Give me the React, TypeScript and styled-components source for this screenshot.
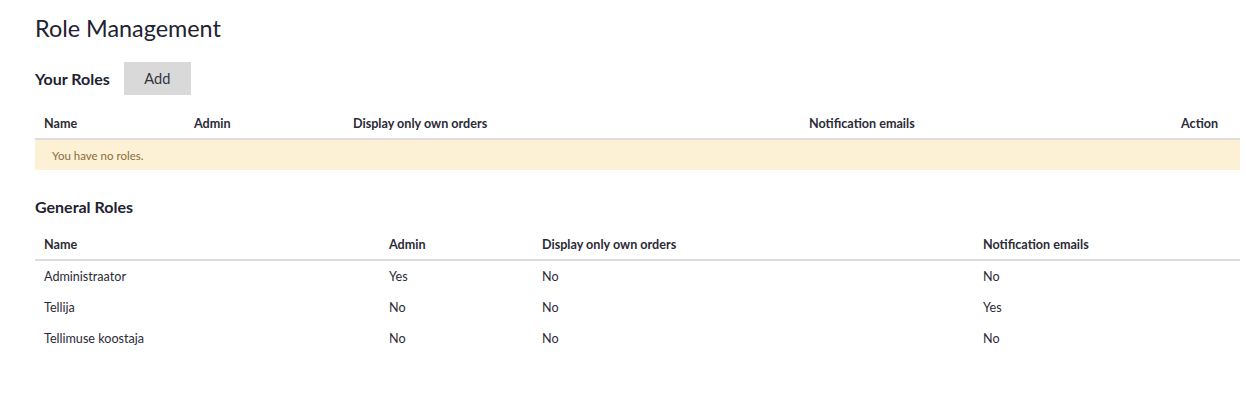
import styled, { createGlobalStyle } from 'styled-components';

const GlobalStyle = createGlobalStyle`
  html, body {
    margin: 0;
    padding: 0;
    background: #fff;
  }
  body {
    font-family: 'Lato', 'Open Sans', sans-serif;
    color: #2b2b38;
  }
`;

type Col = { label: string; width: number };

const yourCols: Col[] = [
  { label: 'Name', width: 150 },
  { label: 'Admin', width: 159 },
  { label: 'Display only own orders', width: 456 },
  { label: 'Notification emails', width: 372 },
  { label: 'Action', width: 68 },
];

const generalCols: Col[] = [
  { label: 'Name', width: 345 },
  { label: 'Admin', width: 153 },
  { label: 'Display only own orders', width: 441 },
  { label: 'Notification emails', width: 266 },
];

const generalRoles = [
  ['Administraator', 'Yes', 'No', 'No'],
  ['Tellija', 'No', 'No', 'Yes'],
  ['Tellimuse koostaja', 'No', 'No', 'No'],
];

const App = () => {
  return (
    <>
      <GlobalStyle />
      <Page>
        <Title>Role Management</Title>

        <SectionHead>
          <SectionTitle>Your Roles</SectionTitle>
          <AddButton type="button">Add</AddButton>
        </SectionHead>

        <Table $gap={14}>
          <colgroup>
            {yourCols.map(c => (
              <col key={c.label} style={{ width: c.width }} />
            ))}
          </colgroup>
          <thead>
            <tr>
              {yourCols.map(c => (
                <Th key={c.label}>{c.label}</Th>
              ))}
            </tr>
          </thead>
          <tbody>
            <tr>
              <EmptyCell colSpan={yourCols.length}>You have no roles.</EmptyCell>
            </tr>
          </tbody>
        </Table>

        <SectionHead $plain>
          <SectionTitle>General Roles</SectionTitle>
        </SectionHead>

        <Table $gap={12}>
          <colgroup>
            {generalCols.map(c => (
              <col key={c.label} style={{ width: c.width }} />
            ))}
          </colgroup>
          <thead>
            <tr>
              {generalCols.map(c => (
                <Th key={c.label}>{c.label}</Th>
              ))}
            </tr>
          </thead>
          <tbody>
            {generalRoles.map(row => (
              <tr key={row[0]}>
                {row.map((cell, i) => (
                  <Td key={i}>{cell}</Td>
                ))}
              </tr>
            ))}
          </tbody>
        </Table>
      </Page>
    </>
  );
};

export default App;

const Page = styled.div`
  padding: 12px 6px 40px 35px;
`;

const Title = styled.h1`
  margin: 0;
  font-size: 23.4px;
  font-weight: 400;
  line-height: 32px;
  color: #222230;
`;

const SectionHead = styled.div<{ $plain?: boolean }>`
  display: flex;
  align-items: center;
  gap: 14px;
  margin-top: ${({ $plain }) => ($plain ? '24px' : '18px')};
  height: ${({ $plain }) => ($plain ? '24px' : '33px')};
`;

const SectionTitle = styled.h2`
  margin: 0;
  font-size: 16px;
  font-weight: 700;
  color: #222230;
`;

const AddButton = styled.button`
  font-family: inherit;
  font-size: 14.6px;
  color: #333340;
  width: 67px;
  height: 33px;
  border: none;
  border-radius: 0;
  background: #d9d9d9;
  cursor: pointer;
`;

const Table = styled.table<{ $gap: number }>`
  width: 100%;
  border-collapse: collapse;
  table-layout: fixed;
  margin-top: ${({ $gap }) => $gap}px;
`;

const Th = styled.th`
  text-align: left;
  font-size: 12.6px;
  font-weight: 700;
  color: #2b2b38;
  padding: 0 9px;
  height: 29px;
  border-bottom: 2px solid #dddddd;
`;

const Td = styled.td`
  font-size: 12.6px;
  color: #2b2b38;
  padding: 0 9px;
  height: 31px;
`;

const EmptyCell = styled.td`
  background: #fcf0d5;
  color: #8a6d3b;
  font-size: 11.5px;
  padding: 0 17px;
  height: 30px;
`;
